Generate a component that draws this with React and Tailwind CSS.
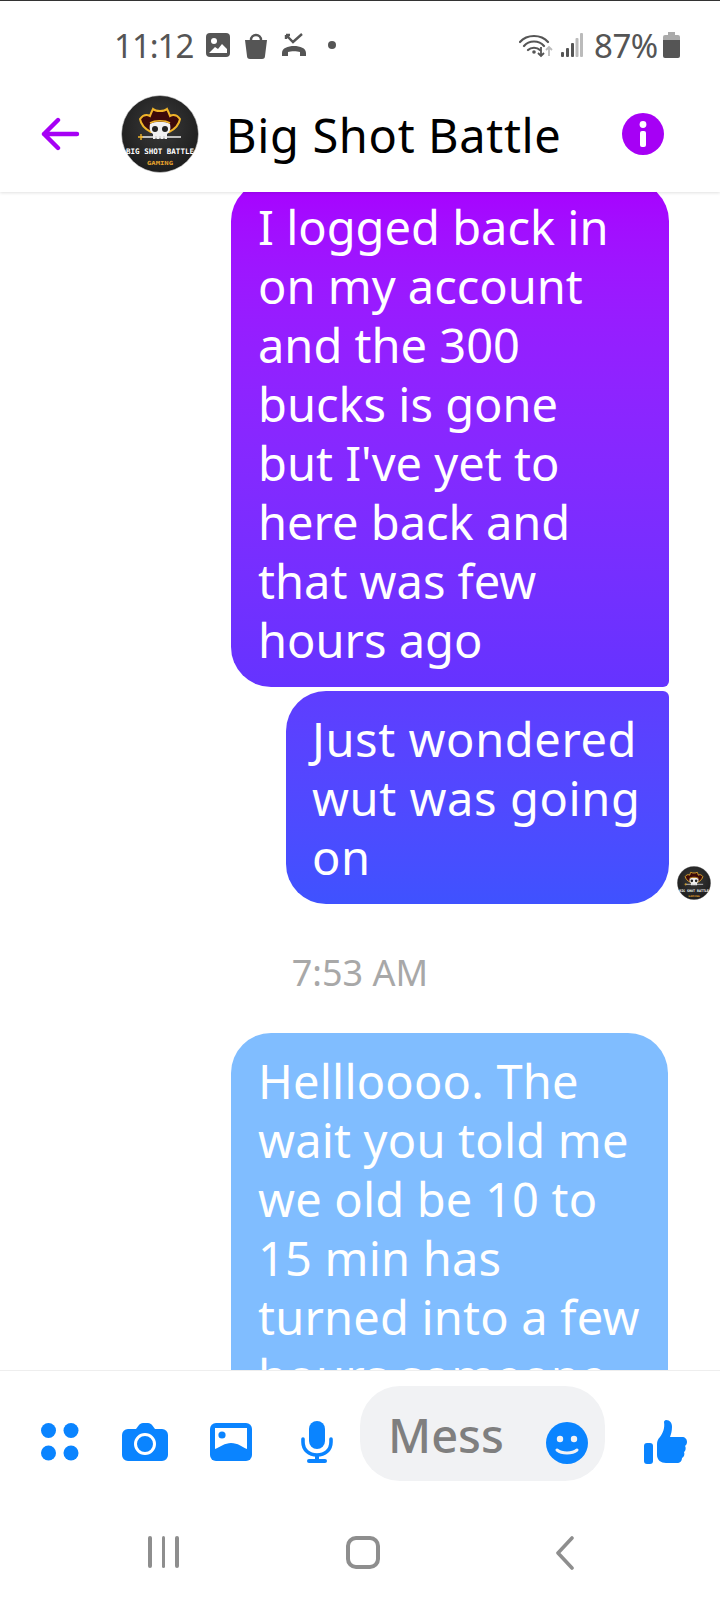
const Avatar = ({ size }) => (
  <svg width={size} height={size} viewBox="0 0 78 78" className="block shrink-0">
    <defs>
      <radialGradient id="avbg" cx="50%" cy="40%" r="60%">
        <stop offset="0%" stopColor="#3a3a3a" />
        <stop offset="100%" stopColor="#1d1d1d" />
      </radialGradient>
    </defs>
    <circle cx="39" cy="39" r="38.5" fill="url(#avbg)" stroke="#d8d8d8" strokeWidth="0.6" />
    <path d="M19 24c3-4 6-5 10-3 1-3 2-5 3-7 2 2 4 2 7 2 3 0 5 0 7-2 1 2 2 4 3 7 4-2 7-1 10 3-1 6-5 10-11 13H30c-6-3-10-7-11-13z" fill="#3c0a0a" stroke="#f0b429" strokeWidth="2" />
    <path d="M29 29c4-3 16-3 20 0 1 5 0 8-3 10v5H32v-5c-3-2-4-5-3-10z" fill="#f1f1f1" />
    <path d="M29 28c5-3 15-3 20 0" fill="none" stroke="#f0b429" strokeWidth="1.6" />
    <circle cx="34" cy="34" r="3" fill="#222" />
    <circle cx="44" cy="34" r="3" fill="#222" />
    <path d="M35 41v3M39 41v3M43 41v3" stroke="#444" strokeWidth="1" />
    <path d="M20 42h40" stroke="#f0f0f0" strokeWidth="1.6" />
    <path d="M20 39v6M17 42h5" stroke="#f0b429" strokeWidth="1.4" />
    <text x="39" y="59" textAnchor="middle" fill="#fff" fontSize="7.6" fontWeight="700" fontFamily="'DejaVu Sans Mono', monospace" textLength="68" lengthAdjust="spacingAndGlyphs">BIG SHOT BATTLE</text>
    <text x="39" y="70" textAnchor="middle" fill="#e5a22c" fontSize="5.6" fontWeight="700" fontFamily="'DejaVu Sans Mono', monospace" textLength="26" lengthAdjust="spacingAndGlyphs">GAMING</text>
  </svg>
);

const StatusBar = () => (
  <div className="flex h-[94px] items-center pb-[6px] text-[#555555]">
    <span className="ml-[114px] w-[80px] text-[33px] leading-none tracking-[-1px]">11:12</span>
    <svg width="24" height="24" viewBox="0 0 24 24" className="ml-[12px]">
      <rect width="24" height="24" rx="4" fill="#555" />
      <circle cx="8" cy="8" r="3" fill="#fff" />
      <path d="M3 20l6-6 3 2 4-5 5 5v4H3z" fill="#fff" />
    </svg>
    <svg width="24" height="27" viewBox="0 0 24 27" className="ml-[14px]">
      <path d="M1 8h22l-2 16a3 3 0 0 1-3 3H6a3 3 0 0 1-3-3L1 8z" fill="#555" />
      <path d="M7 8a5 5 0 0 1 10 0" fill="none" stroke="#555" strokeWidth="2.4" />
    </svg>
    <svg width="26" height="24" viewBox="0 0 26 24" className="ml-[13px]">
      <path d="M1 23v-3c0-5 6-7 12-7s12 2 12 7v3h-6v-4c-3-1-9-1-12 0v4H1z" fill="#555" />
      <path d="M5 2l7 7 9-8M5 2v4M5 2h4" fill="none" stroke="#555" strokeWidth="2.4" />
    </svg>
    <span className="ml-[21px] h-[8px] w-[8px] rounded-full bg-[#555555]" />
    <svg width="36" height="26" viewBox="0 0 36 26" className="ml-[183px]">
      <path d="M1 10c7-8 21-8 28 0M5 14c5-6 15-6 20 0M9 18c3-3 9-3 12 0" fill="none" stroke="#555" strokeWidth="2.2" strokeLinecap="round" />
      <circle cx="15" cy="20" r="1.8" fill="#555" />
      <path d="M22 15v9m-3-3l3 3 3-3" fill="none" stroke="#555" strokeWidth="1.8" />
      <path d="M30 24v-9m-3 3l3-3 3 3" fill="none" stroke="#bbb" strokeWidth="1.8" />
    </svg>
    <svg width="22" height="24" viewBox="0 0 22 24" className="ml-[6px]">
      <rect x="0" y="19" width="3" height="5" rx="1" fill="#555" />
      <rect x="5" y="15" width="3" height="9" rx="1" fill="#555" />
      <rect x="10" y="10" width="3" height="14" rx="1" fill="#555" />
      <rect x="14.5" y="5" width="3" height="19" rx="1" fill="#bbb" />
      <rect x="19" y="0" width="3" height="24" rx="1" fill="#bbb" />
    </svg>
    <span className="ml-[11px] text-[33px] leading-none tracking-[-0.5px]">87%</span>
    <svg width="17" height="26" viewBox="0 0 17 26" className="ml-[5px]">
      <path d="M5 0h7v3h3a2 2 0 0 1 2 2v4H0V5a2 2 0 0 1 2-2h3V0z" fill="#aaa" />
      <path d="M0 8h17v16a2 2 0 0 1-2 2H2a2 2 0 0 1-2-2V8z" fill="#555" />
    </svg>
  </div>
);

const Header = () => (
  <header className="relative z-10 h-[192px] shrink-0 border-t border-[#333333] bg-white shadow-[0_1px_3px_rgba(0,0,0,0.12)]">
    <StatusBar />
    <div className="flex h-[77px] items-center">
      <svg width="40" height="34" viewBox="0 0 40 34" className="ml-[40px]">
        <path d="M37 17H4M18 3L4 17l14 14" fill="none" stroke="#a600f5" strokeWidth="4.4" strokeLinecap="round" strokeLinejoin="round" />
      </svg>
      <div className="ml-[41px]"><Avatar size={78} /></div>
      <span className="ml-[27px] w-[396px] translate-y-[2px] text-[47px] leading-none tracking-[0.65px] text-black">Big Shot Battle</span>
      <svg width="42" height="42" viewBox="0 0 42 42">
        <circle cx="21" cy="21" r="21" fill="#a600f5" />
        <circle cx="21" cy="11.5" r="3.4" fill="#fff" />
        <rect x="18" y="18" width="6" height="16" rx="2" fill="#fff" />
      </svg>
    </div>
  </header>
);

const Lines = ({ items, className = "" }) => (
  <div className={`text-[47px] leading-[59px] text-white ${className}`}>
    {items.map((t) => (
      <div key={t} className="whitespace-nowrap">{t}</div>
    ))}
  </div>
);

const Messages = () => (
  <main className="flex min-h-0 flex-1 flex-col items-start overflow-hidden bg-white">
    <div className="-mt-[11px] ml-[231px] w-[438px] rounded-[40px] rounded-br-[6px] bg-gradient-to-b from-[#a800ff] to-[#6533ff] pb-[17px] pl-[27px] pt-[17px]">
      <Lines items={["I logged back in", "on my account", "and the 300", "bucks is gone", "but I've yet to", "here back and", "that was few", "hours ago"]} />
    </div>
    <div className="relative ml-[286px] mt-[4px] w-[383px] rounded-[40px] rounded-tr-[6px] bg-gradient-to-b from-[#5f3dff] to-[#3f52ff] pb-[17px] pl-[26px] pt-[19px]">
      <Lines className="tracking-[0.6px]" items={["Just wondered", "wut was going", "on"]} />
      <div className="absolute -right-[42px] bottom-[4px]"><Avatar size={34} /></div>
    </div>
    <div className="mt-[47px] w-full text-center text-[36px] leading-[44px] text-[#a8a8a8]">7:53 AM</div>
    <div className="ml-[231px] mt-[38px] w-[437px] rounded-t-[40px] bg-[#80bdff] pb-[17px] pl-[27px] pt-[19px]">
      <Lines className="tracking-[0.2px]" items={["Helllloooo. The".replace("Helll", "Hell"), "wait you told me", "we old be 10 to", "15 min has", "turned into a few", "hours someone"]} />
    </div>
  </main>
);

const Composer = () => (
  <div className="flex h-[112px] shrink-0 items-center border-t border-[#eeeeee] bg-white pt-[13px]">
    <svg width="38" height="38" viewBox="0 0 38 38" className="ml-[41px] mt-[18px]">
      <circle cx="7.5" cy="7.5" r="7.5" fill="#0a84ff" />
      <circle cx="30" cy="7.5" r="7.5" fill="#0a84ff" />
      <circle cx="7.5" cy="30" r="7.5" fill="#0a84ff" />
      <circle cx="30" cy="30" r="7.5" fill="#0a84ff" />
    </svg>
    <svg width="46" height="38" viewBox="0 0 46 38" className="ml-[43px] mt-[18px]">
      <path d="M6 6h8l3-4c1-1 2-2 4-2h5c2 0 3 1 4 2l3 4h7a6 6 0 0 1 6 6v20a6 6 0 0 1-6 6H6a6 6 0 0 1-6-6V12a6 6 0 0 1 6-6z" fill="#0a84ff" />
      <circle cx="23" cy="21" r="9.5" fill="#0a84ff" stroke="#fff" strokeWidth="3" />
    </svg>
    <svg width="42" height="38" viewBox="0 0 42 38" className="ml-[42px] mt-[18px]">
      <rect width="42" height="38" rx="6" fill="#0a84ff" />
      <path d="M5 5h32v21c-5-2-9-6-16-6-6 0-11 4-16 6V5z" fill="#fff" />
      <circle cx="12" cy="12" r="3.6" fill="#0a84ff" />
    </svg>
    <svg width="32" height="42" viewBox="0 0 32 42" className="ml-[49px] mt-[18px]">
      <rect x="8" y="0" width="16" height="28" rx="8" fill="#0a84ff" />
      <path d="M2 18v3c0 8 6 13 14 13s14-5 14-13v-3" fill="none" stroke="#0a84ff" strokeWidth="3.6" strokeLinecap="round" />
      <rect x="14" y="33" width="4" height="7" fill="#0a84ff" />
      <rect x="6" y="38" width="20" height="4" rx="2" fill="#0a84ff" />
    </svg>
    <div className="ml-[27px] flex h-[95px] w-[245px] items-center rounded-[40px] bg-[#f1f2f4] pl-[28px]">
      <span className="w-[158px] translate-y-[2px] text-[47px] font-medium leading-none text-[#7f7f7f]">Mess</span>
      <svg width="42" height="42" viewBox="0 0 42 42" className="translate-y-[10px]">
        <circle cx="21" cy="21" r="21" fill="#0a84ff" />
        <circle cx="14" cy="17" r="3.2" fill="#f1f2f4" />
        <circle cx="28" cy="17" r="3.2" fill="#f1f2f4" />
        <path d="M11 28c5 4 15 4 20 0" fill="none" stroke="#f1f2f4" strokeWidth="3" strokeLinecap="round" />
      </svg>
    </div>
    <svg width="44" height="44" viewBox="0 0 44 44" className="ml-[39px] mt-[18px]">
      <rect x="0" y="23" width="9" height="21" rx="3" fill="#0a84ff" />
      <path d="M22 0c4 0 6 3 6 7 0 4-1 7-2 10h12c3 0 5 2 5 5 0 2-1 3-2 4 1 1 1 5-1 6 1 2 0 5-2 6 0 3-2 5-5 5H22c-5 0-9-3-9-8V24c0-3 1-5 3-7 3-4 5-9 4-15 0-1 1-2 2-2z" fill="#0a84ff" />
    </svg>
  </div>
);

const NavBar = () => (
  <nav className="flex h-[118px] shrink-0 items-start bg-white pt-[54px]">
    <div className="ml-[148px] flex gap-[10px]">
      <span className="h-[32px] w-[3.5px] rounded-full bg-[#8e8e8e]" />
      <span className="h-[32px] w-[3.5px] rounded-full bg-[#8e8e8e]" />
      <span className="h-[32px] w-[3.5px] rounded-full bg-[#8e8e8e]" />
    </div>
    <span className="ml-[167px] h-[33px] w-[34px] rounded-[10px] border-[4px] border-[#8e8e8e]" />
    <svg width="20" height="34" viewBox="0 0 20 34" className="ml-[175px]">
      <path d="M17 2L3 17l14 15" fill="none" stroke="#8e8e8e" strokeWidth="3.6" strokeLinecap="round" strokeLinejoin="round" />
    </svg>
  </nav>
);

export default function App() {
  return (
    <div className="flex h-[1600px] w-[720px] flex-col overflow-hidden bg-white font-['Noto_Sans',sans-serif]">
      <Header />
      <Messages />
      <Composer />
      <NavBar />
    </div>
  );
}
